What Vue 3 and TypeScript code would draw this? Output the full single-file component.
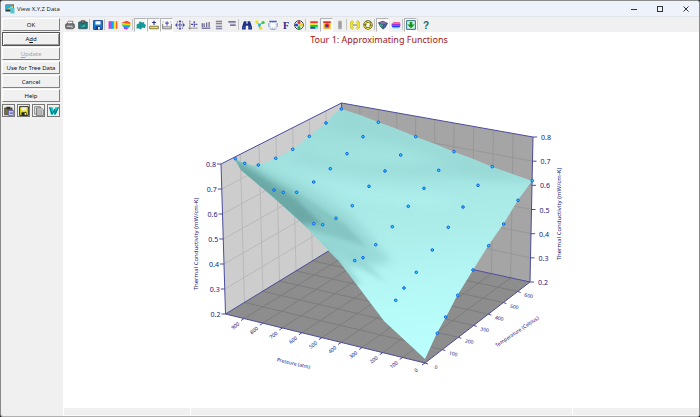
<script setup lang="ts">
type Pt = [number, number]
interface Label { x: number; y: number; text: string }

const lerp = (a: Pt, b: Pt, t: number): Pt => [a[0] + (b[0] - a[0]) * t, a[1] + (b[1] - a[1]) * t]
const poly = (pts: Pt[]): string => pts.map((p) => p.join(',')).join(' ')
const seg = (a: Pt, b: Pt): string => `M${a[0]} ${a[1]}L${b[0]} ${b[1]}`

// Projected corners of the plot box
const leftTop: Pt = [221, 164]
const leftBottom: Pt = [225.5, 314]
const backTop: Pt = [341.5, 103]
const backBottom: Pt = [344, 241.5]
const rightTop: Pt = [533, 137]
const rightBottom: Pt = [530, 282]
const front: Pt = [425, 363]

// Relative positions of the grid lines along each axis
const tempLeft = [0.16, 0.315, 0.456, 0.595, 0.733, 0.87]
const tempRight = [0.165, 0.317, 0.464, 0.603, 0.746, 0.883]
const pressFront = [0.093, 0.187, 0.285, 0.383, 0.483, 0.58, 0.685, 0.788, 0.888]
const pressBack = [0.096, 0.192, 0.288, 0.387, 0.487, 0.588, 0.69, 0.793, 0.896]
const levels = [1, 2, 3, 4, 5].map((n) => n / 6)

const wallGrid = [
  ...tempLeft.map((t) => seg(lerp(leftTop, backTop, t), lerp(leftBottom, backBottom, t))),
  ...levels.map((t) => seg(lerp(leftTop, leftBottom, t), lerp(backTop, backBottom, t))),
].join('')
const backGrid = [
  ...pressBack.map((t) => seg(lerp(backTop, rightTop, t), lerp(backBottom, rightBottom, t))),
  ...levels.map((t) => seg(lerp(backTop, backBottom, t), lerp(rightTop, rightBottom, t))),
].join('')
const floorGrid = [
  ...tempLeft.map((t, i) => seg(lerp(leftBottom, backBottom, t), lerp(front, rightBottom, tempRight[i]))),
  ...pressFront.map((t, i) => seg(lerp(leftBottom, front, t), lerp(backBottom, rightBottom, pressBack[i]))),
].join('')

const tick = (p: Pt, dx: number, dy: number): string => `M${p[0]} ${p[1]}l${dx} ${dy}`
const ticks = [
  ...[0, ...levels, 1].map((t) => tick(lerp(leftTop, leftBottom, t), -4, 0)),
  ...[0, ...levels, 1].map((t) => tick(lerp(rightTop, rightBottom, t), 4, 0)),
  ...[...pressFront, 1].map((t) => tick(lerp(leftBottom, front, t), -3, 2)),
  ...[0, ...tempRight].map((t) => tick(lerp(front, rightBottom, t), 3, 1)),
].join('')

const zNames = ['0.8', '0.7', '0.6', '0.5', '0.4', '0.3', '0.2']
const zLeft: Label[] = zNames.map((text, i) => {
  const p = lerp(leftTop, leftBottom, i / 6)
  return { x: p[0] - 9, y: p[1] + 3, text }
})
const zRight: Label[] = zNames.map((text, i) => {
  const p = lerp(rightTop, rightBottom, i / 6)
  return { x: p[0] + 8, y: p[1] + 3, text }
})
const pressureLabels: Label[] = [...pressFront, 1].map((t, i) => {
  const p = lerp(leftBottom, front, t)
  return { x: p[0] - 9, y: p[1] + 7, text: String(900 - i * 100) }
})
const tempLabels: Label[] = [0, ...tempRight].map((t, i) => {
  const p = lerp(front, rightBottom, t)
  return { x: p[0] + 11, y: p[1] + 4, text: String(i * 100) }
})

const surface: Pt[] = [
  [234, 158], [239, 161], [244, 163], [251, 165], [258, 165], [267, 162], [276, 158], [284, 154], [293, 149],
  [301, 143], [309, 136], [318, 129], [326, 123], [334, 114], [341, 109], [360, 115], [378, 122], [397, 129],
  [416, 137], [435, 144], [454, 152], [473, 159], [492, 167], [512, 174], [532, 181], [518, 200], [504, 223],
  [488, 246], [473, 270], [457, 296], [446, 317], [437, 333], [425, 359], [384, 321], [372, 305], [339, 261],
  [328, 250], [305, 226], [292, 214], [273, 197], [254, 181], [241, 170],
]

const samples: Pt[] = [
  [341.3, 109], [326, 123], [309.3, 136.3], [292.7, 149.3], [275.7, 158.3], [258.3, 165], [244.7, 163.3], [235.3, 158.7],
  [378.3, 122.3], [363, 136.7], [347, 153.7], [330.3, 168.7], [313.7, 182], [296.7, 192.3], [283.3, 192.3], [274, 190],
  [415.7, 136.7], [400.7, 155], [385, 171], [369, 186.3], [352.3, 205.7], [336, 218.3], [322.7, 224.7], [313.7, 223.7],
  [454, 151.7], [438.7, 170.3], [424, 188.3], [408.3, 206.3], [392.3, 226.7], [375.7, 244.7], [363, 257.7], [354.7, 260.5],
  [492.3, 166.7], [478, 185.3], [463, 207], [448.3, 227.3], [432.3, 250], [416.3, 272.3], [404, 288], [395.7, 300.3],
  [532.3, 180.7], [518, 200.3], [503.7, 224], [488.7, 245.7], [473, 270], [457.7, 295.3], [445.7, 317], [437.3, 333.3],
]

const commands = [
  { text: 'OK', key: '' },
  { text: 'Add', key: 'default' },
  { text: 'Update', key: 'off' },
  { text: 'Use for Tree Data', key: '' },
  { text: 'Cancel', key: '' },
  { text: 'Help', key: '' },
]

// Toolbar contents; "|" is a separator and "*" marks a pressed button
const tools = [
  'printer', 'clipboard', '|', 'save', '|', 'bars', 'rainbow', '|', 'surface*', 'plusbar*', 'plusbox*', 'move', 'dots',
  'columns', 'lines', 'lines2', '|', 'find', 'nodes', 'frame', 'font', 'palette', '|', 'bands', 'target*', 'slider', '|',
  'minus', 'rotate', '|', 'solid*', 'layers', '|', 'down*', '|', 'help',
].map((s, id) => ({ id, name: s.replace('*', ''), on: s.endsWith('*') }))
const quick = ['paste', 'disk', 'pages', 'word']
</script>

<template>
  <div class="window">
    <header class="titlebar">
      <svg class="logo" viewBox="0 0 20 20" aria-hidden="true">
        <rect x="1" y="1" width="17" height="14" fill="#27333c" />
        <path d="M2 2h15L2 12z" fill="#19b6df" />
        <path d="M17 2v9H3z" fill="#e0c65a" />
        <path d="M10 8h9v11h-8z" fill="#56c5cd" />
      </svg>
      <h1>View X,Y,Z Data</h1>
      <button class="sys" aria-label="Minimize"><svg viewBox="0 0 6 6"><path d="M0 3.5h6" /></svg></button>
      <button class="sys" aria-label="Maximize"><svg viewBox="0 0 6 6"><rect x=".5" y=".5" width="5" height="5" /></svg></button>
      <button class="sys" aria-label="Close"><svg viewBox="0 0 6 6"><path d="M.5.5l5 5m0-5l-5 5" /></svg></button>
    </header>

    <div class="body">
      <aside class="side">
        <button v-for="c in commands" :key="c.text" class="cmd" :class="c.key" :disabled="c.key === 'off'">
          <template v-if="c.text === 'Add'">A<u>d</u>d</template>
          <template v-else-if="c.text === 'Update'"><u>U</u>pdate</template>
          <template v-else>{{ c.text }}</template>
        </button>
        <div class="quick">
          <button v-for="q in quick" :key="q" :aria-label="q">
            <svg viewBox="0 0 16 16">
              <template v-if="q === 'paste'">
                <path d="M1 3h12v11H1z" fill="#77733a" stroke="#222" /><path d="M4 1h6v4H4z" fill="#333" /><path d="M7 7h8v8H7z" fill="#d9dcf8" stroke="#3636a0" /><path d="M9 10h5m-5 2h5" stroke="#3636a0" />
              </template>
              <template v-else-if="q === 'disk'">
                <path d="M1 1h14v14H1z" fill="#e2e000" stroke="#222" stroke-width="1.5" /><path d="M4 2h8v5H4z" fill="#eee" /><path d="M4 10h8v5H4z" fill="#222" /><path d="M9 11h2v3H9z" fill="#fff" />
              </template>
              <template v-else-if="q === 'pages'">
                <path d="M1 1h9v12H1z" fill="#eee" stroke="#555" /><path d="M4 3h8l3 3v9H4z" fill="#ddd" stroke="#444" /><path d="M6 5v9M8 5v9M10 5v9M12 6v8" stroke="#888" />
              </template>
              <template v-else>
                <path d="M0 2h6l1 7 3-7h6l-5 12H8l-1-3-1 3H3z" fill="#13c6c8" /><path d="M1 2l4 11 4-8 1 8 5-11" fill="none" stroke="#056b70" stroke-width="1.5" />
              </template>
            </svg>
          </button>
        </div>
      </aside>

      <main class="main">
        <nav class="toolbar" aria-label="Plot tools">
          <template v-for="t in tools" :key="t.id">
            <span v-if="t.name === '|'" class="sep"></span>
            <button v-else :class="{ on: t.on }" :aria-label="t.name" :aria-pressed="t.on">
              <svg viewBox="0 0 16 16">
                <template v-if="t.name === 'printer'">
                  <path d="M5 2h8l-2 5H3z" fill="#fff" stroke="#444" /><path d="M1 7l2-1h11l1 2v4l-2 2H2l-1-2z" fill="#75767d" stroke="#333" /><path d="M3 10h9" stroke="#ddd" stroke-width="1.5" /><path d="M10 12h3" stroke="#d9cf60" />
                </template>
                <template v-else-if="t.name === 'clipboard'">
                  <rect x="1" y="3" width="14" height="11" rx="1" fill="#157e7c" stroke="#234" /><path d="M5 1h6v4H5z" fill="#777" stroke="#333" /><path d="M4 12l7-5v3z" fill="#62bbb4" />
                </template>
                <template v-else-if="t.name === 'save'">
                  <path d="M1 1h14v14H1z" fill="#1685d9" stroke="#123a8d" stroke-width="1.5" /><path d="M4 2h8v5H4z" fill="#fff" /><path d="M4 10h8v5H4z" fill="#173780" /><path d="M8 11h3v4H8z" fill="#e9f3ff" />
                </template>
                <template v-else-if="t.name === 'bars'">
                  <path d="M1 2h3v12H1z" fill="#e81cc0" /><path d="M4 2h2v12H4z" fill="#5432ff" /><path d="M6 2h2v12H6z" fill="#00a9ff" /><path d="M8 2h2v12H8z" fill="#22df54" /><path d="M10 2h3v12h-3z" fill="#ffe500" /><path d="M13 2h2v12h-2z" fill="#ff4d16" />
                </template>
                <template v-else-if="t.name === 'rainbow'">
                  <path d="M2 4l7-3 6 3v3L1 5z" fill="#ff4a24" /><path d="M1 5l14 1v3L1 7z" fill="#ffea00" /><path d="M1 7l14 1-1 2L2 9z" fill="#2bdb42" /><path d="M2 9l13 0-2 3-9-1z" fill="#09a9f5" /><path d="M4 11l9 1-4 3-4-1z" fill="#b424f0" />
                </template>
                <template v-else-if="t.name === 'surface'">
                  <path d="M1 7l3-1 2-4 4 2 3-1 0 3 3 2-2 5-3-1-4 3-3-2-3 1z" fill="#129b99" />
                </template>
                <template v-else-if="t.name === 'plusbar'">
                  <path d="M1 10h14v4H1z" fill="#f4e51d" stroke="#444" /><path d="M8 1v7M5 4h6" stroke="#202080" stroke-width="1.5" />
                </template>
                <template v-else-if="t.name === 'plusbox'">
                  <path d="M1 6v8h14V6M1 11h14" fill="none" stroke="#777" stroke-width="1.5" /><path d="M8 2v7M5 5h6" stroke="#3939b0" stroke-width="1.5" /><path d="M1 3h2m10 0h2" stroke="#777" />
                </template>
                <template v-else-if="t.name === 'move'">
                  <path d="M8 1v14M1 8h14" stroke="#32329a" stroke-width="1.5" stroke-dasharray="3 1" /><path d="M8 0l2 3H6zM8 16l2-3H6zM0 8l3-2v4zM16 8l-3-2v4z" fill="#32329a" /><path d="M3 3h10v10H3z" fill="none" stroke="#5555a5" stroke-width="1.5" stroke-dasharray="2 2" />
                </template>
                <template v-else-if="t.name === 'dots'">
                  <path d="M3 1v14M1 13h14" stroke="#555" stroke-width="1.5" stroke-dasharray="2 1" /><path d="M10 2v9M5 7h10" stroke="#3e3ea0" stroke-width="2" stroke-dasharray="3 1" />
                </template>
                <template v-else-if="t.name === 'columns'">
                  <path d="M2 5v6M5 5v6M9 4v7M13 3v8" stroke="#66668f" stroke-width="2" /><path d="M1 13h14" stroke="#32327f" stroke-width="1.5" />
                </template>
                <template v-else-if="t.name === 'lines'">
                  <path d="M3 2h10M3 6h10M3 10h10M3 14h10" stroke="#5a5a80" stroke-width="1.5" /><path d="M3 4h10M3 12h10" stroke="#bbb" />
                </template>
                <template v-else-if="t.name === 'lines2'">
                  <path d="M2 3h12M5 8h9" stroke="#48488c" stroke-width="2" /><path d="M4 5h10" stroke="#aaa" />
                </template>
                <template v-else-if="t.name === 'find'">
                  <path d="M3 2h4v4h2V2h4l3 9v4h-6V9H6v6H0v-4z" fill="#1d3287" /><path d="M3 11v2m10-2v2" stroke="#9db7ff" />
                </template>
                <template v-else-if="t.name === 'nodes'">
                  <path d="M2 3l5 5 6-5M7 8v5" fill="none" stroke="#61866f" stroke-width="1.5" /><circle cx="3" cy="3" r="2.5" fill="#efe413" /><circle cx="13" cy="4" r="2.5" fill="#37cb42" /><circle cx="7" cy="8" r="2.5" fill="#26b9ce" /><circle cx="9" cy="13" r="2.5" fill="#e3dc20" />
                </template>
                <template v-else-if="t.name === 'frame'">
                  <path d="M3 4h10v9H3z" fill="#fff" stroke="#6b87bd" stroke-dasharray="2 1" /><path d="M2 2h12" stroke="#4e64c0" stroke-width="2" /><path d="M1 5v6M15 5v6M4 15h8" stroke="#8ba5cd" stroke-width="1.5" />
                </template>
                <text v-else-if="t.name === 'font'" x="3" y="14" class="glyph serif">F</text>
                <template v-else-if="t.name === 'palette'">
                  <circle cx="8" cy="8" r="7" fill="#fff" stroke="#353545" stroke-width="1.5" /><circle cx="8" cy="4" r="2.5" fill="#e92d2d" /><circle cx="4" cy="8" r="2.5" fill="#2342dd" /><circle cx="12" cy="8" r="2.5" fill="#e9d60f" /><circle cx="8" cy="12" r="2.5" fill="#1bad35" /><circle cx="8" cy="8" r="1" fill="#333" />
                </template>
                <template v-else-if="t.name === 'bands'">
                  <path d="M2 2h12v3H2z" fill="#f6352a" /><path d="M2 5h12v3H2z" fill="#f2e915" /><path d="M2 8h12v3H2z" fill="#19c33e" /><path d="M2 11h12v3H2z" fill="#263be0" /><path d="M9 5h5v2H9zM10 11h4v3h-4z" fill="#7ff" />
                </template>
                <template v-else-if="t.name === 'target'">
                  <path d="M2 2h12v3H2z" fill="#f02a20" /><path d="M2 5h12v7H2z" fill="#f7df14" /><circle cx="8" cy="9" r="4" fill="#ef332a" /><circle cx="8" cy="9" r="2" fill="#263bb0" /><path d="M2 13h12" stroke="#e7a51c" stroke-width="2" />
                </template>
                <template v-else-if="t.name === 'slider'">
                  <path d="M6 2h4v12H6z" fill="#bbb" stroke="#888" /><path d="M6 5h4M6 8h4M6 11h4" stroke="#777" />
                </template>
                <template v-else-if="t.name === 'minus'">
                  <path d="M5 2L2 5v6l3 3M11 2l3 3v6l-3 3" fill="none" stroke="#a8a432" stroke-width="4" /><path d="M5 2L2 5v6l3 3M11 2l3 3v6l-3 3" fill="none" stroke="#f0e722" stroke-width="3" /><path d="M5 8h6" stroke="#6f6a1d" stroke-width="1.5" />
                </template>
                <template v-else-if="t.name === 'rotate'">
                  <circle cx="8" cy="8" r="5.5" fill="none" stroke="#625f1f" stroke-width="4" /><circle cx="8" cy="8" r="5.5" fill="none" stroke="#ebe02d" stroke-width="2" stroke-dasharray="5 1" /><path d="M1 6l2 3 3-2M15 10l-2-3-3 2" fill="none" stroke="#625f1f" />
                </template>
                <template v-else-if="t.name === 'solid'">
                  <path d="M0 4l8-3 8 4-4 7-4 3-5-5z" fill="#43535d" /><path d="M1 4l7-2 6 3-6 2z" fill="#8b6fa1" /><path d="M2 6l6 2-1 4-4-3z" fill="#22b3a4" /><path d="M9 8l5-2-5 8z" fill="#3f66d0" />
                </template>
                <template v-else-if="t.name === 'layers'">
                  <path d="M2 5l2-2h10l1 3H1z" fill="#f36196" /><path d="M1 6h14v3H1z" fill="#9c31e5" /><path d="M1 9h14l-1 2H2z" fill="#203fe5" /><path d="M2 11h12l-1 2H3z" fill="#29d6e7" />
                </template>
                <template v-else-if="t.name === 'down'">
                  <path d="M1 1h14v14H1z" fill="#c9ede7" stroke="#286b79" stroke-width="1.5" /><path d="M6 3h4v4h4l-6 6-6-6h4z" fill="#129719" />
                </template>
                <text v-else x="3" y="15" class="glyph">?</text>
              </svg>
            </button>
          </template>
        </nav>

        <section class="plot">
          <svg viewBox="63 32 636 376" role="img" aria-label="Tour 1: Approximating Functions">
            <defs>
              <linearGradient id="skin" gradientUnits="userSpaceOnUse" x1="390" y1="115" x2="410" y2="350">
                <stop offset="0" stop-color="#9bdbd8" />
                <stop offset=".2" stop-color="#a4e5e2" />
                <stop offset=".5" stop-color="#acedea" />
                <stop offset=".8" stop-color="#b6faf8" />
                <stop offset="1" stop-color="#bafffd" />
              </linearGradient>
              <filter id="soft" x="-30%" y="-30%" width="160%" height="160%"><feGaussianBlur stdDeviation="5" /></filter>
              <filter id="fine" x="-30%" y="-30%" width="160%" height="160%"><feGaussianBlur stdDeviation="2" /></filter>
              <clipPath id="shape"><polygon :points="poly(surface)" /></clipPath>
            </defs>

            <text x="379" y="43" class="title">Tour 1: Approximating Functions</text>

            <polygon :points="poly([leftTop, backTop, backBottom, leftBottom])" fill="#cdcdcd" />
            <polygon :points="poly([backTop, rightTop, rightBottom, backBottom])" fill="#a5a5a5" />
            <polygon :points="poly([leftBottom, backBottom, rightBottom, front])" fill="#8d8d8d" />
            <path :d="wallGrid" stroke="#b9b9b9" />
            <path :d="backGrid" stroke="#979797" />
            <path :d="floorGrid" stroke="#7c7c7c" />
            <polyline class="axis" :points="poly([leftBottom, backBottom, rightBottom])" />
            <polyline class="axis" :points="poly([leftBottom, leftTop, backTop, rightTop, rightBottom, front, leftBottom])" />
            <path class="axis" :d="seg(backTop, backBottom)" />
            <path class="axis" :d="ticks" />

            <polygon :points="poly(surface)" fill="url(#skin)" />
            <g clip-path="url(#shape)">
              <path d="M228 150L300 184L350 214L392 262L350 268L290 225L235 175Z" fill="#93d4d1" opacity=".8" filter="url(#soft)" />
              <path d="M228 152L262 172L300 194L345 224L366 246L345 240L300 228L270 210L228 172Z" fill="#7fbfbc" opacity=".75" filter="url(#fine)" />
              <path d="M228 156L262 177L296 199L322 224L300 224L262 196L228 170Z" fill="#68a4a2" opacity=".85" filter="url(#fine)" />
              <path d="M318 232L352 250L386 282L365 270L338 250Z" fill="#93d5d2" opacity=".8" filter="url(#fine)" />
              <path d="M300 228L330 246L362 284L350 284L320 250Z" fill="#8bcbc8" opacity=".6" filter="url(#fine)" />
              <path d="M300 150Q360 172 440 160T540 184L500 178Q430 180 380 176T290 160Z" fill="#98d8d5" opacity=".6" filter="url(#soft)" />
              <path d="M340 108L400 128L530 178L490 180L400 145L330 130Z" fill="#97d7d4" opacity=".7" filter="url(#soft)" />
              <path d="M300 170Q350 190 390 190T470 200L440 208Q390 210 350 198Z" fill="#b0f1ee" opacity=".6" filter="url(#soft)" />
            </g>

            <g class="samples"><circle v-for="(p, i) in samples" :key="i" :cx="p[0]" :cy="p[1]" r="1.3" /></g>

            <text v-for="l in zLeft" :key="'l' + l.text" :x="l.x + 4" :y="l.y" class="z end">{{ l.text }}</text>
            <text v-for="l in zRight" :key="'r' + l.text" :x="l.x" :y="l.y" class="z">{{ l.text }}</text>
            <text v-for="l in pressureLabels" :key="'p' + l.text" :transform="`translate(${l.x} ${l.y}) rotate(-38)`" class="small" dy="2">{{ l.text }}</text>
            <text v-for="l in tempLabels" :key="'t' + l.text" :transform="`translate(${l.x} ${l.y}) rotate(12)`" class="small" dy="2">{{ l.text }}</text>
            <text transform="translate(198 244) rotate(-90)" class="name">Thermal Conductivity (mW/cm-K)</text>
            <text transform="translate(561 214) rotate(-90)" class="name">Thermal Conductivity (mW/cm-K)</text>
            <text transform="translate(293 365) rotate(13)" class="small">Pressure (atm)</text>
            <text transform="translate(518 333) rotate(-34)" class="small">Temperature (Celsius)</text>
          </svg>
        </section>

        <footer class="status"><span></span><span></span><span></span></footer>
      </main>
    </div>
  </div>
</template>

<style>
html { background: #111; }
</style>

<style scoped>
.window {
  box-sizing: border-box;
  display: flex;
  flex-direction: column;
  height: 100vh;
  border: 1px solid #8a8a8a;
  border-bottom-color: #b0b0b0;
  border-radius: 3px;
  background: #f0f0f0;
  overflow: hidden;
  font-family: "Open Sans", "Noto Sans", sans-serif;
  color: #111;
}
button { margin: 0; padding: 0; font: inherit; color: inherit; }
.titlebar {
  display: flex;
  align-items: center;
  flex: 0 0 16px;
  background: #eef3fb;
  border-bottom: 1px solid #e2e5ea;
  box-sizing: border-box;
}
.logo { width: 10px; height: 10px; margin: 0 2px 0 4px; }
h1 { flex: 1; margin: 0; font-size: 6px; line-height: 14px; font-weight: 400; }
.sys { width: 26px; height: 14px; border: 0; background: none; display: grid; place-items: center; }
.sys svg { width: 6px; height: 6px; fill: none; stroke: #333; }
.body { display: flex; flex: 1; min-height: 0; }
.side {
  box-sizing: border-box;
  flex: 0 0 62px;
  display: flex;
  flex-direction: column;
  gap: 1px;
  padding: 1px 3px 0 1px;
}
.cmd {
  box-sizing: border-box;
  height: 13px;
  border: 1px solid;
  border-color: #fff #808080 #808080 #fff;
  background: #f0f0f0;
  font-family: "Noto Sans", sans-serif;
  font-size: 6px;
  line-height: 10px;
}
.cmd.default { height: 14px; border: 1px solid #555; box-shadow: inset 1px 1px #fff, inset -1px -1px #999; }
.cmd.off { color: #a5a5a5; }
.quick { display: flex; gap: 2px; margin-top: 1px; }
.quick button {
  box-sizing: border-box;
  flex: 1;
  height: 13px;
  border: 1px solid #777;
  background: #f0f0f0;
  display: grid;
  place-items: center;
}
.quick svg { width: 10px; height: 10px; }
.main { flex: 1; min-width: 0; display: flex; flex-direction: column; }
.toolbar { display: flex; flex: 0 0 15px; align-items: center; background: #f0f0f0; }
.toolbar button {
  box-sizing: border-box;
  width: 13px;
  height: 14px;
  border: 1px solid transparent;
  background: none;
  display: grid;
  place-items: center;
}
.toolbar button.on { background: #f8f8f8; border-color: #b4b4b4 #fff #fff #b4b4b4; }
.toolbar svg { width: 10px; height: 10px; }
.sep { box-sizing: border-box; width: 2px; height: 11px; border-left: 1px solid #c4c4c4; }
.glyph { font: 700 16px "Liberation Sans", sans-serif; fill: #126a72; }
.glyph.serif { font-family: "Liberation Serif", serif; fill: #25258a; }
.plot { flex: 1; min-height: 0; background: #fff; }
.plot svg { display: block; width: 100%; height: 100%; }
.plot text { font-family: "Noto Sans", sans-serif; fill: #16167c; text-anchor: middle; }
.plot text.title { font-size: 9px; fill: #a31515; }
.plot text.z { font-size: 7px; text-anchor: start; }
.plot text.end { text-anchor: end; }
.plot text.name { font-size: 6px; }
.plot text.small { font-size: 5px; }
.axis { fill: none; stroke: #4b4b9c; }
.samples { fill: #38cfff; stroke: #0a62ea; }
.status { display: grid; grid-template-columns: 1fr 3fr 1fr; flex: 0 0 7px; background: #f0f0f0; border-bottom: 1px solid #fafafa; }
.status span { border-left: 1px solid #fff; }
</style>
